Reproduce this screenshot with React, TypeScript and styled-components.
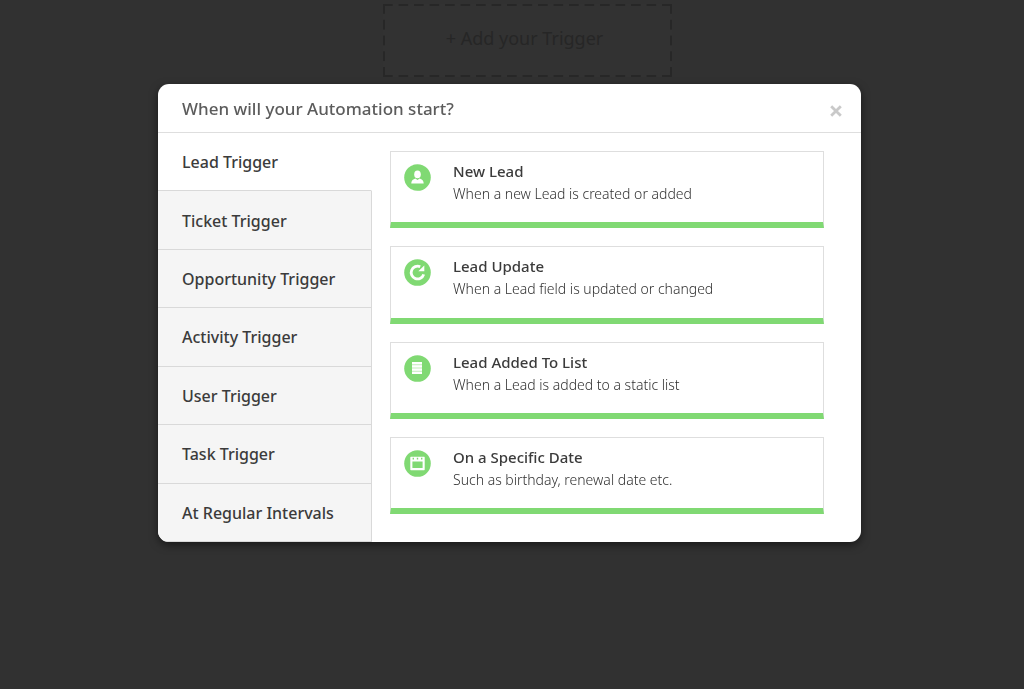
import React, { useState } from "react";
import styled, { createGlobalStyle } from "styled-components";

const GlobalStyle = createGlobalStyle`
  *, *::before, *::after { box-sizing: border-box; }
  body {
    margin: 0;
    background: #313131;
    font-family: "Noto Sans", "Open Sans", sans-serif;
    color: #3b3b3b;
  }
  button { font: inherit; color: inherit; cursor: pointer; }
`;

const Page = styled.main`
  display: flex;
  flex-direction: column;
  align-items: center;
  min-height: 100vh;
  padding-top: 4px;
`;

const dash = "#272727";

const AddTrigger = styled.button`
  width: 289px;
  height: 73px;
  margin-left: 31px;
  padding: 0 6px 6px 0;
  border: 0;
  color: #262626;
  font-size: 18px;
  line-height: 26px;
  background:
    linear-gradient(to right, ${dash} 10px, transparent 10px) left top / calc((100% - 10px) / 18) 2px repeat-x,
    linear-gradient(to right, ${dash} 10px, transparent 10px) left bottom / calc((100% - 10px) / 18) 2px repeat-x,
    linear-gradient(to bottom, ${dash} 10px, transparent 10px) left top / 2px calc((100% - 10px) / 4) repeat-y,
    linear-gradient(to bottom, ${dash} 10px, transparent 10px) right top / 2px calc((100% - 10px) / 4) repeat-y,
    #323232;
`;

const Overlay = styled.div`
  position: fixed;
  inset: 0;
  display: flex;
  justify-content: center;
  align-items: flex-start;
  padding: 84px 21px 16px 16px;
  overflow: auto;
`;

const Dialog = styled.section`
  width: 100%;
  max-width: 703px;
  border-radius: 11px;
  background: #fff;
  overflow: hidden;
  box-shadow: 0 3px 8px rgba(0, 0, 0, 0.5);
`;

const Header = styled.header`
  display: flex;
  align-items: center;
  justify-content: space-between;
  padding: 13px 18px 11px 24px;
  border-bottom: 1px solid #dedede;
`;

const Title = styled.h1`
  margin: 0;
  color: #5c5c5c;
  font-size: 17px;
  font-weight: 500;
  line-height: 24px;
`;

const Close = styled.button`
  display: flex;
  padding: 4px 0 0;
  border: 0;
  background: none;
  color: #c9c9c9;
`;

const Body = styled.div`
  display: grid;
  grid-template-columns: 214px 1fr;
  min-height: 409px;
`;

const Tabs = styled.div`
  display: flex;
  flex-direction: column;
`;

const Tab = styled.button<{ $active: boolean }>`
  flex: 1;
  padding: 1px 24px 0;
  border: 0;
  border-bottom: 1px solid #d9d9d9;
  border-right: 1px solid ${(p) => (p.$active ? "#fff" : "#d9d9d9")};
  background: ${(p) => (p.$active ? "#fff" : "#f5f5f5")};
  font-size: 16px;
  font-weight: 500;
  line-height: 24px;
  text-align: left;
`;

const Cards = styled.div`
  display: flex;
  flex-direction: column;
  gap: 18px;
  padding: 18px 37px 28px 18px;
`;

const Card = styled.button`
  flex: 1;
  display: flex;
  align-items: flex-start;
  gap: 22px;
  padding: 8px 13px;
  border: 1px solid #dedede;
  border-bottom: 6px solid #80d973;
  background: #fff;
  text-align: left;
`;

const Badge = styled.svg`
  flex: none;
  width: 27px;
  height: 27px;
  margin-top: 4px;
`;

const CardName = styled.span`
  display: block;
  font-size: 15px;
  font-weight: 500;
  line-height: 22px;
`;

const CardNote = styled.span`
  display: block;
  color: #303030;
  font-size: 14px;
  font-weight: 300;
  line-height: 24px;
`;

const tabs = ["Lead Trigger", "Ticket Trigger", "Opportunity Trigger", "Activity Trigger", "User Trigger", "Task Trigger", "At Regular Intervals"];

const glyphs = {
  person: (
    <g fill="#fff">
      <ellipse cx="13.5" cy="10.4" rx="3.3" ry="3.8" />
      <path d="M7.3 19.6c0-2.8 1.5-4.4 4.1-5.2l2.1 1.7 2.1-1.7c2.6.8 4.1 2.4 4.1 5.2z" />
    </g>
  ),
  refresh: (
    <g>
      <path d="M19.7 15.4A6.4 6.4 0 1 1 16.2 7.7" fill="none" stroke="#fff" strokeWidth="2.8" />
      <path d="M20.3 6.4v5.8h-6z" fill="#fff" />
    </g>
  ),
  list: (
    <g fill="#fff">
      <rect x="8" y="7" width="10" height="12" opacity=".5" />
      <path d="M8 7h10v2.2H8zM8 10.3h10v2.2H8zM8 13.6h10v2.2H8zM8 16.8h10v2.2H8z" />
    </g>
  ),
  calendar: (
    <g>
      <path fillRule="evenodd" fill="#fff" d="M6.9 6.7h13.2a.6.6 0 0 1 .6.6V19.6a.6.6 0 0 1-.6.6H6.9a.6.6 0 0 1-.6-.6V7.3a.6.6 0 0 1 .6-.6zM8.4 11.5v6.6h10.2v-6.6z" />
      <path d="M9.3 7.8v1.6M13.5 7.8v1.6M17.7 7.8v1.6" stroke="#80d973" strokeWidth="1.4" />
    </g>
  ),
};

const cards: { glyph: keyof typeof glyphs; name: string; note: string }[] = [
  { glyph: "person", name: "New Lead", note: "When a new Lead is created or added" },
  { glyph: "refresh", name: "Lead Update", note: "When a Lead field is updated or changed" },
  { glyph: "list", name: "Lead Added To List", note: "When a Lead is added to a static list" },
  { glyph: "calendar", name: "On a Specific Date", note: "Such as birthday, renewal date etc." },
];

export default function App() {
  const [active, setActive] = useState(0);
  return (
    <>
      <GlobalStyle />
      <Page>
        <AddTrigger type="button">+ Add your Trigger</AddTrigger>
      </Page>
      <Overlay>
        <Dialog role="dialog" aria-modal="true" aria-labelledby="dialog-title">
          <Header>
            <Title id="dialog-title">When will your Automation start?</Title>
            <Close type="button" aria-label="Close">
              <svg width="14" height="14" viewBox="0 0 14 14">
                <path d="M2.2 2.2l9.6 9.6M11.8 2.2l-9.6 9.6" stroke="currentColor" strokeWidth="2.8" />
              </svg>
            </Close>
          </Header>
          <Body>
            <Tabs role="tablist" aria-orientation="vertical">
              {tabs.map((label, i) => (
                <Tab key={label} type="button" role="tab" aria-selected={i === active} $active={i === active} onClick={() => setActive(i)}>
                  {label}
                </Tab>
              ))}
            </Tabs>
            <Cards role="tabpanel" aria-label={tabs[active]}>
              {cards.map((c) => (
                <Card key={c.name} type="button">
                  <Badge viewBox="0 0 27 27" aria-hidden="true">
                    <circle cx="13.5" cy="13.5" r="13.3" fill="#80d973" />
                    {glyphs[c.glyph]}
                  </Badge>
                  <span>
                    <CardName>{c.name}</CardName>
                    <CardNote>{c.note}</CardNote>
                  </span>
                </Card>
              ))}
            </Cards>
          </Body>
        </Dialog>
      </Overlay>
    </>
  );
}
